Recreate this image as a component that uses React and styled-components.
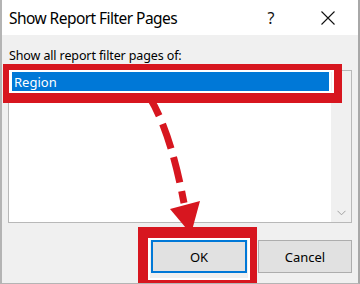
import React from "react";
import styled, { createGlobalStyle } from "styled-components";

const Global = createGlobalStyle`
  html, body { margin: 0; padding: 0; background: #ffffff; }
  body { font-family: "Noto Sans", "Open Sans", sans-serif; }
  * { box-sizing: border-box; }
`;

const Dialog = styled.div`
  position: relative;
  width: 360px;
  height: 284px;
  overflow: hidden;
  background: #f0f0f0;
  border-left: 2px solid #b4b4b4;
  border-right: 2px solid #a8a8a8;
  border-bottom: 1px solid #b4b4b4;
  display: flex;
  flex-direction: column;
`;

const TitleBar = styled.div`
  height: 35px;
  background: #ffffff;
  display: flex;
  align-items: center;
  padding: 0 0 0 7px;
  flex-shrink: 0;
`;

const Title = styled.div`
  flex: 1;
  font-size: 15.5px;
  color: #000;
  letter-spacing: -0.55px;
`;

const Help = styled.div`
  width: 14px;
  font-size: 16px;
  color: #111;
  margin-right: 43px;
  text-align: center;
`;

const CloseIcon = styled.svg`
  width: 14px;
  height: 14px;
  margin-right: 23px;
`;

const Body = styled.div`
  flex: 1;
  display: flex;
  flex-direction: column;
  padding: 13px 6px 0 6px;
`;

const Label = styled.div`
  font-size: 12.5px;
  line-height: 16px;
  color: #000;
  padding-left: 1px;
  letter-spacing: -0.12px;
`;

const ListBox = styled.div`
  margin-top: 6px;
  height: 153px;
  background: #ffffff;
  border: 1px solid #b8b8b8;
  display: flex;
`;

const Items = styled.div`
  flex: 1;
  padding: 1px 2px 0 3px;
`;

const Item = styled.div`
  height: 20px;
  line-height: 20px;
  padding-left: 2px;
  font-size: 13px;
  color: ${(p) => (p.$selected ? "#ffffff" : "#000")};
  background: ${(p) => (p.$selected ? "#0078d7" : "transparent")};
`;

const ScrollBar = styled.div`
  width: 20px;
  background: #f0f0f0;
  display: flex;
  flex-direction: column;
  justify-content: flex-end;
  align-items: center;
  padding-bottom: 6px;
`;

const Buttons = styled.div`
  margin-top: 17px;
  display: flex;
  justify-content: flex-end;
  gap: 11px;
`;

const Button = styled.div`
  width: ${(p) => p.$w}px;
  height: 33px;
  background: #e1e1e1;
  border: ${(p) => (p.$default ? "2px solid #0078d7" : "1px solid #adadad")};
  display: flex;
  align-items: center;
  justify-content: center;
  font-size: 13px;
  color: #000;
`;

const Highlight = styled.div`
  position: absolute;
  left: ${(p) => p.$x}px;
  top: ${(p) => p.$y}px;
  width: ${(p) => p.$w}px;
  height: ${(p) => p.$h}px;
  border-style: solid;
  border-color: #d7161f;
  border-width: ${(p) => p.$bw};
  box-shadow: inset 0 0 0 2px #ffffff;
  pointer-events: none;
`;

const Overlay = styled.svg`
  position: absolute;
  left: 0;
  top: 0;
  width: 360px;
  height: 284px;
  pointer-events: none;
`;

export default function App() {
  return (
    <>
      <Global />
      <Dialog>
        <TitleBar>
          <Title>Show Report Filter Pages</Title>
          <Help>?</Help>
          <CloseIcon viewBox="0 0 14 14">
            <path d="M0.5 0.5 L13.5 13.5 M13.5 0.5 L0.5 13.5" stroke="#111" strokeWidth="1.1" fill="none" />
          </CloseIcon>
        </TitleBar>
        <Body>
          <Label>Show all report filter pages of:</Label>
          <ListBox>
            <Items>
              <Item $selected>Region</Item>
            </Items>
            <ScrollBar>
              <svg width="9" height="6" viewBox="0 0 9 6">
                <path d="M0.5 0.8 L4.5 4.8 L8.5 0.8" stroke="#a0a0a0" strokeWidth="1" fill="none" />
              </svg>
            </ScrollBar>
          </ListBox>
          <Buttons>
            <Button $w={96} $default>OK</Button>
            <Button $w={94}>Cancel</Button>
          </Buttons>
        </Body>
        <Highlight $x={1} $y={64} $w={339} $h={39} $bw="6px 8px 10px 6px" />
        <Highlight $x={136} $y={227} $w={119} $h={62} $bw="11px 7px 9px 10px" />
        <Overlay viewBox="0 0 360 284">
          <path
            d="M148 98 C 160 118, 172 150, 182 203"
            stroke="#d7161f"
            strokeWidth="7"
            fill="none"
            strokeDasharray="26 9"
            strokeDashoffset="6"
          />
          <polygon points="168,209 198,201 189,234" fill="#d7161f" />
        </Overlay>
      </Dialog>
    </>
  );
}
